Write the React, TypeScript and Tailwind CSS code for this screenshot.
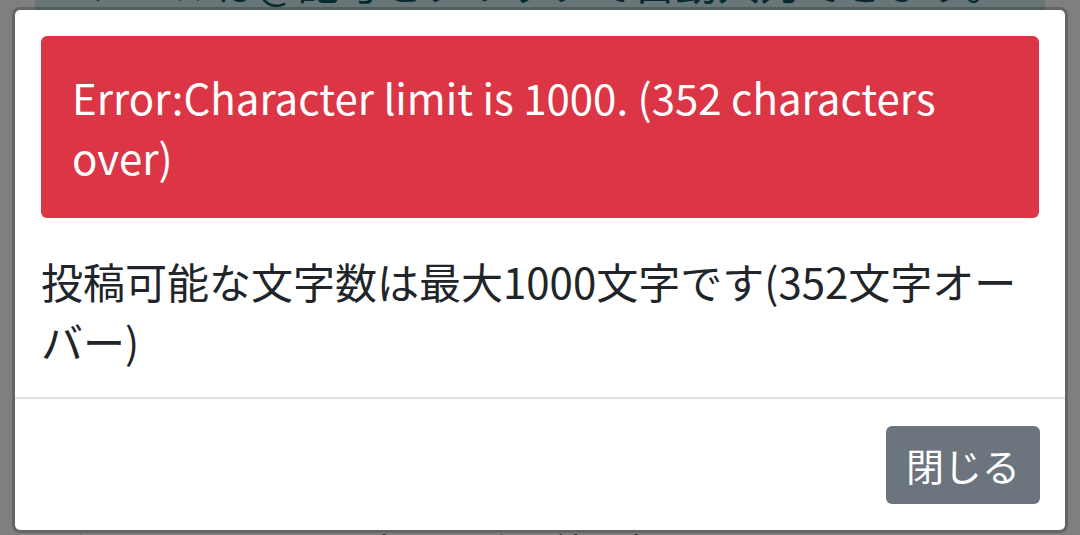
import React from "react";

export default function App() {
  return (
    <div className="relative h-[535px] w-[1080px] overflow-hidden bg-white font-['Noto_Sans_CJK_JP',sans-serif]">
      {/* page behind the modal */}
      <div className="flex h-full flex-col justify-between">
        <div className="-mt-[48px] ml-[35px] h-[60px] w-[1010px] bg-[#d1ecf1] pl-[30px] text-[42px] leading-[60px] text-[#0c5460]">
          Eメールは@記号をクリックで自動入力できます。
        </div>
        <div className="-mb-[47px] pl-[62px] text-[42px] leading-[60px] text-[#212529]">
          利用ガイドをお読みの上ご投稿ください。
        </div>
      </div>

      {/* modal */}
      <div className="absolute inset-0 bg-black/50 px-[12px] pt-[7px]">
        <div className="overflow-hidden rounded-[8px] border-[3px] border-black/20 bg-white bg-clip-padding">
          <div className="p-[26px]">
            <div className="mb-[33px] rounded-[6px] bg-[#dc3545] px-[31px] py-[31px] text-[42px] leading-[60px] text-white">
              Error:Character limit is 1000. (352 characters over)
            </div>
            <p className="text-[42px] leading-[60px] text-[#212529]">
              投稿可能な文字数は最大1000文字です(352文字オーバー)
            </p>
          </div>
          <div className="flex justify-end border-t-2 border-[#dee2e6] px-[25px] pb-[26px] pt-[27px]">
            <button className="flex h-[78px] w-[154px] items-center justify-center rounded-[6px] bg-[#6c757d] text-[38px] leading-[60px] text-white">
              閉じる
            </button>
          </div>
        </div>
      </div>
    </div>
  );
}
